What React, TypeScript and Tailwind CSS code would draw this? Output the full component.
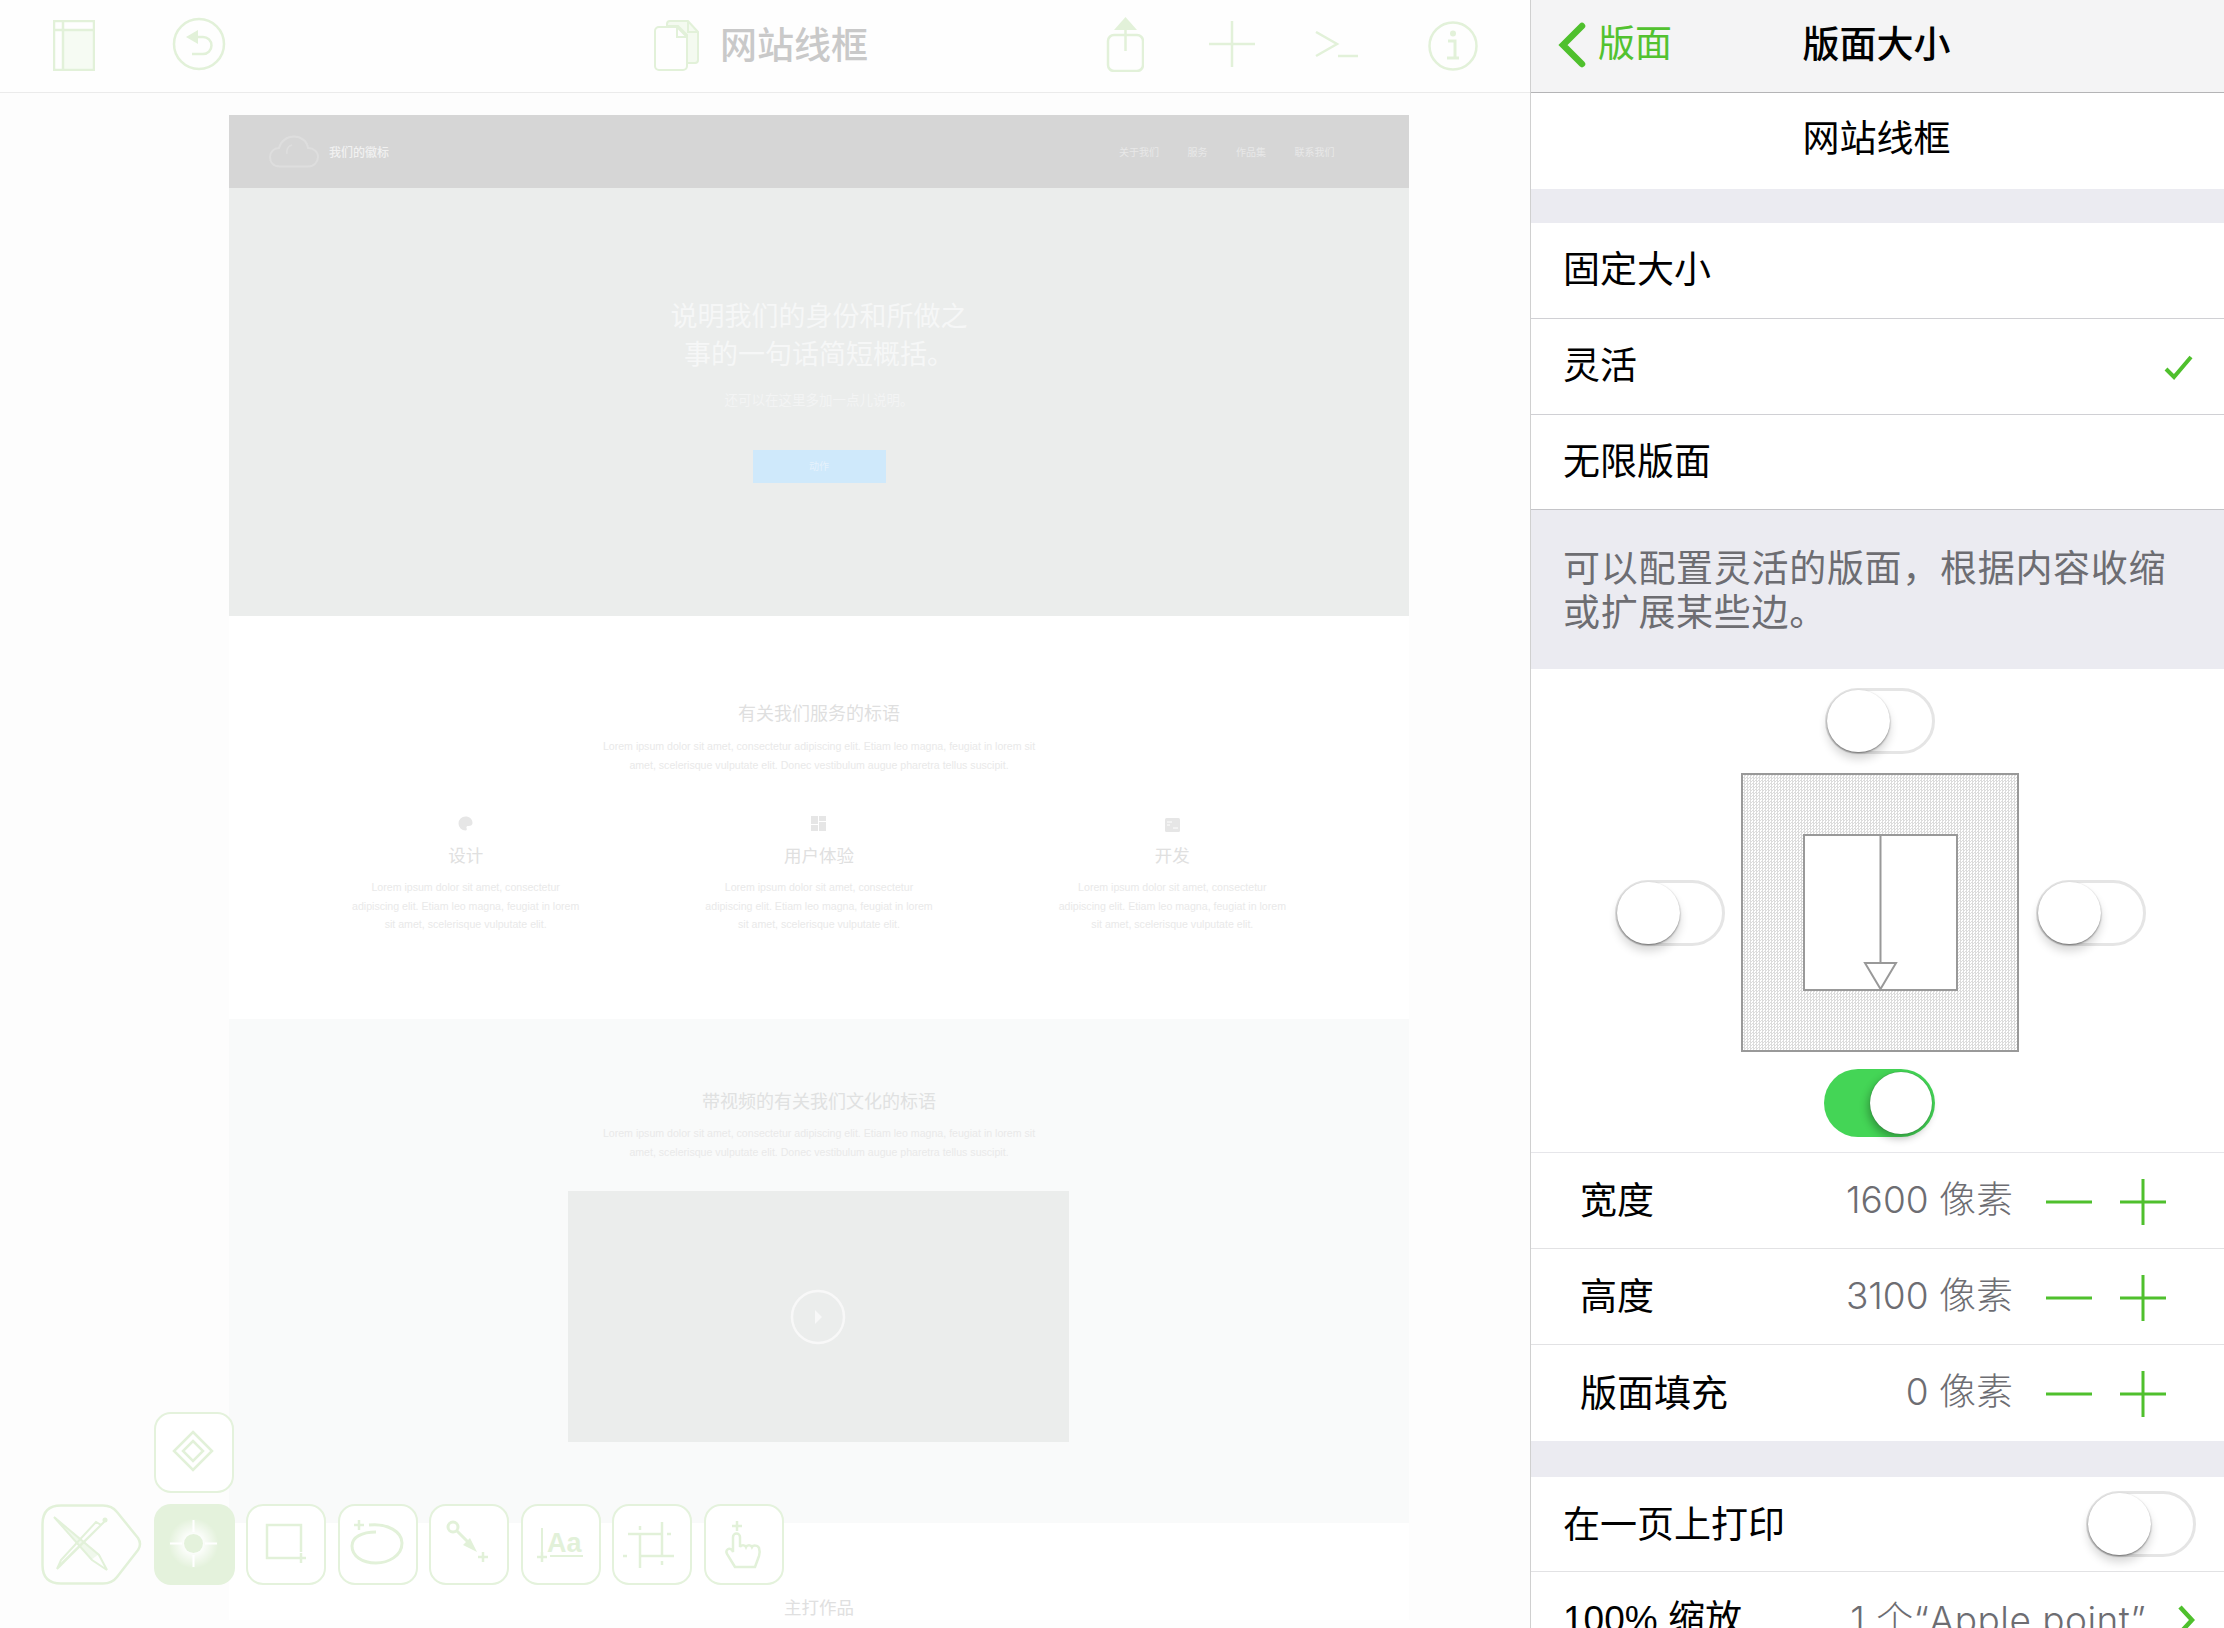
import type { ReactNode } from "react"

const line = "#e2f1d9"

function Sidebar() {
  return (
    <svg width="42" height="51" viewBox="0 0 42 51" className="shrink-0">
      <rect x="10" y="10" width="31" height="40" fill="#f6fbf3" />
      <rect x="1" y="1" width="40" height="49" fill="none" stroke={line} strokeWidth="2.5" />
      <path d="M1 10H41M10 1V50" fill="none" stroke={line} strokeWidth="2.5" />
    </svg>
  )
}

function Undo() {
  return (
    <svg width="54" height="54" viewBox="0 0 54 54" className="shrink-0">
      <circle cx="27" cy="27" r="25" fill="none" stroke={line} strokeWidth="2.5" />
      <path d="M14 20L26 13V27Z" fill={line} />
      <path d="M24 20H31A8.500 8.500 0 0 1 31 37H20" fill="none" stroke={line} strokeWidth="2.500" />
    </svg>
  )
}

function Docs() {
  return (
    <svg width="46" height="51" viewBox="0 0 46 51" className="shrink-0">
      <path d="M13 6V4a3 3 0 0 1 3-3H34L44 12V40a3 3 0 0 1-3 3H33V15L24 6Z" fill="#f4faf0" stroke={line} strokeWidth="2" />
      <path d="M34 1V12H44" fill="none" stroke={line} strokeWidth="2" />
      <path d="M5 7H23L33 17V46a4 4 0 0 1-4 4H5a4 4 0 0 1-4-4V11a4 4 0 0 1 4-4Z" fill="#fefefe" stroke={line} strokeWidth="2" />
      <path d="M23 7V17H33" fill="none" stroke={line} strokeWidth="2" />
    </svg>
  )
}

function Share() {
  return (
    <svg width="38" height="55" viewBox="0 0 38 55" className="shrink-0">
      <rect x="2" y="18" width="35" height="36" rx="6" fill="none" stroke={line} strokeWidth="2.500" />
      <path d="M19.500 0L31 13H8Z" fill={line} />
      <path d="M19.500 10V34" stroke={line} strokeWidth="2.500" />
    </svg>
  )
}

function Plus46() {
  return (
    <svg width="46" height="46" viewBox="0 0 46 46" className="shrink-0">
      <path d="M23 0V46M0 23H46" stroke={line} strokeWidth="2.500" />
    </svg>
  )
}

function Prompt() {
  return (
    <svg width="44" height="27" viewBox="0 0 44 27" className="shrink-0">
      <path d="M1 1L22 13L1 25" fill="none" stroke={line} strokeWidth="2.500" />
      <path d="M23 25H43" stroke={line} strokeWidth="2.500" />
    </svg>
  )
}

function Info() {
  return (
    <svg width="50" height="50" viewBox="0 0 50 50" className="shrink-0">
      <circle cx="25" cy="25" r="23.500" fill="none" stroke={line} strokeWidth="2.500" />
      <circle cx="25" cy="12.500" r="3" fill={line} />
      <path d="M20 20H27V36M19 37H31" fill="none" stroke={line} strokeWidth="3" />
    </svg>
  )
}

function TopBar() {
  return (
    <header className="flex h-[93px] shrink-0 items-center border-b border-[#ebebeb] bg-[#fefefe]">
      <div className="ml-[53px] -mt-[2px]"><Sidebar /></div>
      <div className="ml-[77px] -mt-[4px]"><Undo /></div>
      <div className="ml-[428px] -mt-[2px]"><Docs /></div>
      <span className="ml-[20px] w-[151px] text-[37px] leading-none font-medium text-[#c9c9c9]">网站线框</span>
      <div className="ml-[235px] -mt-[4px]"><Share /></div>
      <div className="ml-[65px] -mt-[4px]"><Plus46 /></div>
      <div className="ml-[60px] -mt-[3px]"><Prompt /></div>
      <div className="ml-[69px]"><Info /></div>
    </header>
  )
}

function Tool({ children, active }: { children?: ReactNode; active?: boolean }) {
  return (
    <div className={active ? "h-[81px] w-[81px] shrink-0 rounded-[17px] bg-[#e4f2dc]" : "h-[81px] w-[80px] shrink-0 rounded-[17px] border-[2.5px] border-[#e4f2dc] bg-white"}>
      <svg width="76" height="76" viewBox="0 0 76 76" className="overflow-visible">
        {children}
      </svg>
    </div>
  )
}

function ToolPlus({ x, y }: { x: number; y: number }) {
  return <path d={`M${x - 5} ${y}H${x + 5}M${x} ${y - 5}V${y + 5}`} stroke={line} strokeWidth="2.500" />
}

function Toolbar() {
  return (
    <div className="absolute left-[41px] top-[1412px]">
      <div className="ml-[113px] mb-[11px]">
        <Tool>
          <path d="M37 18L56 37L37 56L18 37Z" fill="none" stroke={line} strokeWidth="2.500" />
          <path d="M37 27L47 37L37 47L27 37Z" fill="none" stroke={line} strokeWidth="2.500" />
        </Tool>
      </div>
      <div className="flex">
        <svg width="101" height="81" viewBox="0 0 101 81" className="shrink-0">
          <path d="M20 1.500H62Q71 1.500 76 8L97 34Q101 40 97 46L76 73Q71 79.500 62 79.500H20Q1.500 79.500 1.500 61V20Q1.500 1.500 20 1.500Z" fill="#fefefe" stroke={line} strokeWidth="2.500" />
          <path d="M13 13L58 51L66 66L51 56Z" fill="none" stroke={line} strokeWidth="2" />
          <path d="M13 13L50 56L58 50Z" fill={line} opacity="0.5" />
          <path d="M60 21L65 16L16 65M60 21L22 58L16 65L20 56L55 18L60 21Z" fill="none" stroke={line} strokeWidth="2" />
          <circle cx="64" cy="16" r="2.500" fill={line} />
        </svg>
        <div className="ml-[12px]">
          <Tool active>
            <defs>
              <radialGradient id="glow">
                <stop offset="0.3" stopColor="#ffffff" stopOpacity="1" />
                <stop offset="1" stopColor="#ffffff" stopOpacity="0" />
              </radialGradient>
            </defs>
            <circle cx="39.500" cy="39.500" r="25" fill="url(#glow)" />
            <circle cx="39.500" cy="39.500" r="9.500" fill="#e4f2dc" />
            <path d="M39.500 16V28M39.500 51V63M16 39.500H28M51 39.500H63" stroke="#ffffff" strokeWidth="2" />
          </Tool>
        </div>
        <div className="ml-[11px] flex gap-[11.500px]">
          <Tool>
            <path d="M48 52H19V19H53V46" fill="none" stroke={line} strokeWidth="2.500" />
            <ToolPlus x={53} y={52} />
          </Tool>
          <Tool>
            <path d="M29 19C48 17 62 26 62 37C62 50 48 57 36 57C22 57 12 50 12 40C12 31 22 26 36 26" fill="none" stroke={line} strokeWidth="3" />
            <ToolPlus x={19} y={19} />
          </Tool>
          <Tool>
            <circle cx="22" cy="21" r="5" fill="none" stroke={line} strokeWidth="3" />
            <path d="M26 25L40 39" stroke={line} strokeWidth="3" />
            <path d="M46 46L32 39L39 32Z" fill={line} />
            <ToolPlus x={52} y={51} />
          </Tool>
          <Tool>
            <text x="24" y="46" fontSize="27" fontWeight="700" fill={line} fontFamily="Liberation Sans, sans-serif">Aa</text>
            <path d="M19 22V46M27 50H60" stroke={line} strokeWidth="2" />
            <ToolPlus x={19} y={51} />
          </Tool>
          <Tool>
            <path d="M14 28H47M26 28V62M48 16V50M26 50H60" fill="none" stroke={line} strokeWidth="2.500" />
            <path d="M26 20V24M53 28H57M9 50H13M48 55V59" stroke={line} strokeWidth="2.500" />
          </Tool>
          <Tool>
            <path d="M29 61L21 48C19 44 23 41 26 44L27 46V31A3.500 3.500 0 0 1 34 31V41C35 38.500 39 38.500 40 41C41 38.500 45 38.500 46 41C47 39 52 39 53 42C54 45 54 47 53 50L49 61Z" fill="none" stroke={line} strokeWidth="2.500" />
            <ToolPlus x={31} y={20} />
          </Tool>
        </div>
      </div>
    </div>
  )
}

function Cloud() {
  return (
    <svg width="50" height="33" viewBox="0 0 50 33" className="shrink-0">
      <path d="M11 31.500C4 31.500 1 27 1 22C1 17 5 13 10 13C12 6 18 1.500 25 1.500C32 1.500 38 6 39 13C45 13 49 17 49 22C49 27 45 31.500 39 31.500Z" fill="none" stroke="#dedede" strokeWidth="2" />
      <path d="M23 10C19 11 17 15 18 19" fill="none" stroke="#dedede" strokeWidth="1.500" />
    </svg>
  )
}

const loremTop = (
  <>
    Lorem ipsum dolor sit amet, consectetur adipiscing elit. Etiam leo magna, feugiat in lorem sit
    <br />
    amet, scelerisque vulputate elit. Donec vestibulum augue pharetra tellus suscipit.
  </>
)

function Feature({ icon, title }: { icon: ReactNode; title: string }) {
  return (
    <div className="flex flex-col items-center">
      <div className="flex h-[22px] items-center">{icon}</div>
      <p className="mt-[10px] text-[17.500px] leading-[24px] text-[#e0e0e0]">{title}</p>
      <p className="mt-[10px] text-center text-[10.600px] leading-[18.500px] text-[#e9e9e9]">
        Lorem ipsum dolor sit amet, consectetur
        <br />
        adipiscing elit. Etiam leo magna, feugiat in lorem
        <br />
        sit amet, scelerisque vulputate elit.
      </p>
    </div>
  )
}

function Canvas() {
  return (
    <div className="ml-[229px] mt-[22px] flex w-[1180px] flex-col">
      <div className="flex h-[73px] items-center bg-[#d6d6d6] pl-[40px]">
        <Cloud />
        <span className="ml-[10px] mt-[2px] text-[12px] font-medium text-[#f1f1f1]">我们的徽标</span>
        <nav className="ml-[730px] mt-[1px] flex gap-[28.500px] text-[10px] text-[#e8e8e8]">
          <span>关于我们</span>
          <span>服务</span>
          <span>作品集</span>
          <span>联系我们</span>
        </nav>
      </div>

      <section className="flex h-[428px] flex-col items-center bg-[#ebedec] pt-[110px] text-[#f6f7f7]">
        <h2 className="text-center text-[27px] leading-[38px] font-normal">
          说明我们的身份和所做之
          <br />
          事的一句话简短概括。
        </h2>
        <p className="mt-[19px] text-[13.500px] leading-[16px] text-[#f3f4f4]">还可以在这里多加一点儿说明。</p>
        <div className="mt-[41px] flex h-[33px] w-[133px] items-center justify-center bg-[#cfe9fb] text-[10px] text-[#e6f2fb]">动作</div>
      </section>

      <section className="flex h-[403px] flex-col items-center bg-white pt-[86px]">
        <h3 className="text-[18px] leading-[24px] text-[#dfdfdf]">有关我们服务的标语</h3>
        <p className="mt-[11px] text-center text-[10.600px] leading-[18.500px] text-[#e9e9e9]">{loremTop}</p>
        <div className="mt-[38px] grid w-[1060px] grid-cols-3">
          <Feature
            title="设计"
            icon={
              <svg width="15" height="15" viewBox="0 0 15 15">
                <path d="M7.500 0.500A7 7 0 1 0 7.500 14.500C9 14.500 9 13 8.500 12C8 10.500 9 10 10.500 10C13 10 14.500 9 14.500 7C14.500 3 11.500 0.500 7.500 0.500Z" fill="#e6e6e6" />
              </svg>
            }
          />
          <Feature
            title="用户体验"
            icon={
              <svg width="15" height="15" viewBox="0 0 15 15">
                <path d="M0 0H7V8H0ZM8 0H15V5H8ZM8 6H15V15H8ZM0 9H7V15H0Z" fill="#e6e6e6" />
              </svg>
            }
          />
          <Feature
            title="开发"
            icon={
              <svg width="15" height="14" viewBox="0 0 15 14" className="mt-[4px]">
                <rect width="15" height="14" rx="1.500" fill="#e6e6e6" />
                <path d="M2 4H7M2 7H5M8 10H13" stroke="#ffffff" strokeWidth="1" />
              </svg>
            }
          />
        </div>
      </section>

      <section className="flex h-[504px] flex-col items-center bg-[#f9fafa] pt-[71px]">
        <h3 className="text-[18px] leading-[24px] text-[#e0e1e1]">带视频的有关我们文化的标语</h3>
        <p className="mt-[10px] text-center text-[10.600px] leading-[18.500px] text-[#e9e9e9]">{loremTop}</p>
        <div className="-ml-[2px] mt-[30px] flex h-[251px] w-[501px] items-center justify-center bg-[#ebedec]">
          <svg width="56" height="56" viewBox="0 0 56 56">
            <circle cx="28" cy="28" r="26" fill="none" stroke="#f8f8f8" strokeWidth="2.500" />
            <path d="M25 21L32 28L25 35Z" fill="#f8f8f8" />
          </svg>
        </div>
      </section>

      <section className="flex flex-1 flex-col items-center bg-white pt-[73px]">
        <h3 className="text-[17.500px] leading-[24px] text-[#e0e0e0]">主打作品</h3>
      </section>
    </div>
  )
}

function Toggle({ on }: { on?: boolean }) {
  return (
    <div className={on ? "flex h-[68px] w-[111px] shrink-0 justify-end rounded-full bg-[#44d556] p-[3px]" : "flex h-[66px] w-[110px] shrink-0 rounded-full border-[3px] border-[#e5e5e5] bg-white"}>
      <div className={on ? "h-[62px] w-[62px] rounded-full bg-white shadow-[-2px_4px_8px_rgba(0,0,0,0.3),0_0_1px_rgba(0,0,0,0.4)]" : "-m-[1px] h-[62px] w-[63px] rounded-full bg-white shadow-[0_7px_10px_rgba(0,0,0,0.16),0_1px_2px_rgba(0,0,0,0.45)]"} />
    </div>
  )
}

function Row({ children }: { children: ReactNode }) {
  return (
    <div className="flex h-[96px] shrink-0 items-center border-b-[1.500px] border-[#d0d0d4] bg-white pl-[32px] text-[37px] text-black">
      {children}
    </div>
  )
}

function SizeRow({ label, value, last }: { label: string; value: string; last?: boolean }) {
  return (
    <div className={last ? "flex h-[96px] shrink-0 items-center bg-white pr-[58px] pl-[49px]" : "flex h-[96px] shrink-0 items-center border-b-[1.500px] border-[#e2e2e4] bg-white pr-[58px] pl-[49px]"}>
      <span className="mt-[3px] text-[37px] text-black">{label}</span>
      <span className="ml-auto -mt-[2px] text-[37px] text-[#6d6d72] font-['Inter','Noto_Sans_CJK_SC',sans-serif] font-light">{value}</span>
      <svg width="46" height="46" viewBox="0 0 46 46" className="ml-[33px] mt-[2px] shrink-0">
        <path d="M0 23H46" stroke="#4fc02d" strokeWidth="3" />
      </svg>
      <svg width="46" height="46" viewBox="0 0 46 46" className="ml-[28px] mt-[2px] shrink-0">
        <path d="M23 0V46M0 23H46" stroke="#4fc02d" strokeWidth="3" />
      </svg>
    </div>
  )
}

function Inspector() {
  return (
    <aside className="flex w-[694px] shrink-0 flex-col border-l-[1.500px] border-[#d0d0d0] bg-[#ebebf1]">
      <div className="relative flex h-[93px] shrink-0 items-center justify-center border-b-[1.500px] border-[#b4b4b6] bg-[#f4f4f5]">
        <div className="absolute left-[26px] top-[22px] flex items-center">
          <svg width="30" height="46" viewBox="0 0 30 46" className="shrink-0">
            <path d="M25 4L6 23L25 42" fill="none" stroke="#4fc02d" strokeWidth="6.500" strokeLinecap="round" />
          </svg>
          <span className="ml-[11px] text-[37px] leading-[46px] text-[#52c230]">版面</span>
        </div>
        <span className="ml-[-2px] text-[37px] font-medium text-black">版面大小</span>
      </div>

      <div className="flex h-[96px] shrink-0 items-center justify-center bg-white pr-[2px] pb-[2px] text-[37px] text-black">网站线框</div>
      <div className="h-[34px] shrink-0" />

      <Row>固定大小</Row>
      <Row>
        灵活
        <svg width="30" height="26" viewBox="0 0 30 26" className="ml-auto mr-[30px] shrink-0">
          <path d="M2 15L10 23L27 3" fill="none" stroke="#4fc02d" strokeWidth="4" />
        </svg>
      </Row>
      <div className="flex h-[95px] shrink-0 items-center border-b-[1.500px] border-[#c4c4c8] bg-white pt-[2px] pl-[32px] text-[37px] text-black">无限版面</div>

      <div className="h-[159px] shrink-0 pt-[38px] pl-[32px] text-[37px] leading-[44px] tracking-[0.700px] text-[#6d6d72]">
        可以配置灵活的版面，根据内容收缩
        <br />
        或扩展某些边。
      </div>

      <div className="flex h-[484px] shrink-0 flex-col border-b-[1.500px] border-[#e6e6ea] bg-white pt-[19px]">
        <div className="ml-[294px]"><Toggle /></div>
        <div className="mt-[19px] flex items-center pl-[84px]">
          <Toggle />
          <div className="ml-[16px] flex h-[279px] w-[278px] shrink-0 items-center justify-center border-2 border-[#999999] bg-[repeating-conic-gradient(#dcdcdc_0_25%,#ffffff_0_50%)] bg-[length:3px_3px]">
            <div className="h-[157px] w-[155px] border-2 border-[#999999] bg-white">
              <svg width="151" height="153" viewBox="0 0 151 153">
                <path d="M75.500 0V127" stroke="#999999" strokeWidth="2" />
                <path d="M60 127H91L75.500 153Z" fill="#ffffff" stroke="#999999" strokeWidth="2" />
              </svg>
            </div>
          </div>
          <div className="ml-[17px]"><Toggle /></div>
        </div>
        <div className="mt-[17px] ml-[293px]"><Toggle on /></div>
      </div>

      <SizeRow label="宽度" value="1600 像素" />
      <SizeRow label="高度" value="3100 像素" />
      <SizeRow label="版面填充" value="0 像素" last />

      <div className="h-[36px] shrink-0" />

      <div className="flex h-[95px] shrink-0 items-center justify-between border-b-[1.500px] border-[#e2e2e4] bg-white pr-[28px] pl-[32px] text-[37px] text-black">
        <span className="mt-[3px]">在一页上打印</span>
        <Toggle />
      </div>
      <div className="flex h-[96px] shrink-0 items-center bg-white pr-[29px] pl-[32px] text-[37px] text-black">
        100% 缩放
        <span className="ml-auto tracking-[0.500px] text-[#6d6d72] font-['Inter','Noto_Sans_CJK_SC',sans-serif] font-light">1 个“Apple point”</span>
        <svg width="18" height="30" viewBox="0 0 18 30" className="ml-[31px] shrink-0">
          <path d="M3 2L15 15L3 28" fill="none" stroke="#4fc02d" strokeWidth="4.500" />
        </svg>
      </div>
    </aside>
  )
}

export default function App() {
  return (
    <main className="relative flex h-[1628px] w-[2224px] overflow-hidden bg-[#fdfdfd] font-['Liberation_Sans','Noto_Sans_CJK_SC',sans-serif]">
      <div className="flex w-[1530px] shrink-0 flex-col">
        <TopBar />
        <Canvas />
      </div>
      <Inspector />
      <Toolbar />
    </main>
  )
}
